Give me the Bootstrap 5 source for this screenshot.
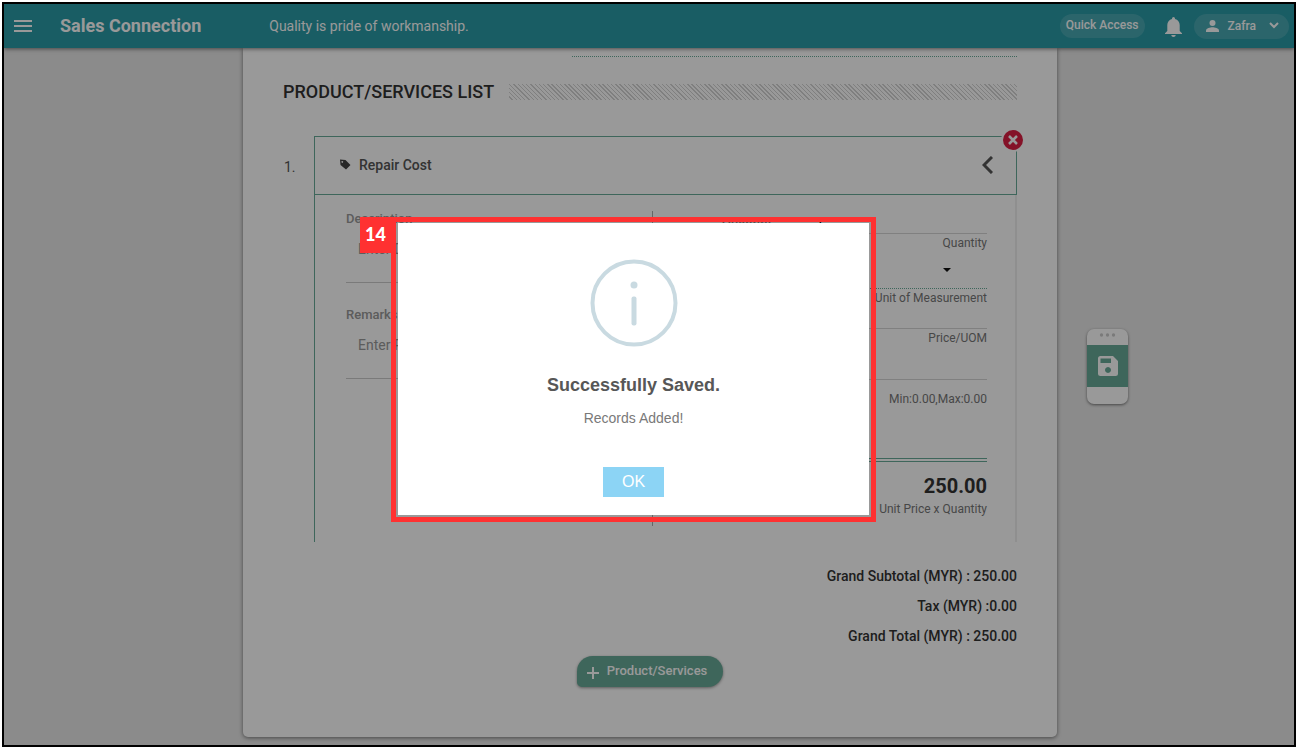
<!DOCTYPE html>
<html lang="en">
<head>
<meta charset="utf-8">
<meta name="viewport" content="width=device-width, initial-scale=1">
<title>Sales Connection</title>
<link href="https://cdn.jsdelivr.net/npm/bootstrap@5.3.0/dist/css/bootstrap.min.css" rel="stylesheet">
<style>
:root { --teal: #2a9ba7; --green: #68aa98; }
body { font-family: Roboto, "Liberation Sans", sans-serif; font-size: 14px; line-height: 18px; color: #333; background: #fff; padding: 2px 4px 4px 2px; display: flex; flex-direction: column; }
svg { display: block; flex: none; }
.app-frame { border: 2px solid #000; background: #e8e8e8; overflow: hidden; }
.topbar { background: var(--teal); height: 44px; padding: 0 5px 0 8px; color: #fff; box-shadow: 0 1px 4px rgba(0,0,0,.5); z-index: 1; }
.brand { font-size: 18px; font-weight: 700; line-height: 24px; color: #fff; margin-left: 26px; }
.motto { margin-left: 68px; }
.pill { border: 0; border-radius: 13px; background: rgba(255,255,255,.14); color: #fff; font-size: 12px; font-weight: 500; }
.pill-quick { padding: 2px 6px 4px; }
.pill-user { padding: 3px 10px 4px 12px; gap: 9px; margin-left: 10px; }
.bell { margin-left: 18px; }
.workspace { display: grid; grid-template-columns: 1fr minmax(0, 814px) 1fr; padding: 0 0 8px 2px; }
.sheet { grid-column: 2; background: #fff; border-radius: 0 0 5px 5px; box-shadow: 0 1px 4px rgba(0,0,0,.5); padding: 8px 40px 50px; }
.dotted-end { width: 445px; max-width: 100%; border-top: 1px dotted var(--green); }
.title-row { padding: 23px 0 32px; }
.section-title { font-size: 18px; font-weight: 500; line-height: 24px; margin: 0; }
.hatch { height: 16px; margin-left: 15px; background: repeating-linear-gradient(45deg, #fff 0 2px, #d4d4d4 2px 3px); }
.item-no { width: 31px; flex: none; padding: 22px 0 0 1px; color: #555; }
.item-panel { min-width: 0; }
.item-head { height: 59px; border: 1px solid var(--green); padding: 0 23px 2px 24px; }
.item-name { color: #555; font-weight: 500; margin-left: 8px; }
.remove-btn { width: 24px; height: 24px; top: -9px; right: -9px; }
.item-body { border-left: 1px solid var(--green); border-right: 2px solid #eee; padding: 16px 28px 16px 31px; }
.item-left { width: 307px; flex: none; border-right: 1px solid #aaa; }
.item-right { padding: 0 0 8px 69px; min-width: 0; }
.caption { display: block; font-size: 13px; font-weight: 500; line-height: 16px; color: #999; }
.memo { display: block; width: 100%; height: 56px; resize: none; border: 0; border-bottom: 1px solid #ccc; background: transparent; padding: 13px 12px 0; outline: 0; overflow: hidden; }
.memo::placeholder { color: #999; opacity: 1; }
.caption + .memo + .caption { margin-top: 24px; }
.field-row { border-bottom: 1px solid #d5d5d5; }
.field-row label { width: 94px; flex: none; font-size: 13px; font-weight: 500; color: #888; }
.field-row input, .uom { border: 0; background: transparent; padding: 0; min-width: 0; outline: 0; width: 100%; height: 18px; }
.h-qty { height: 23px; }
.h-price { height: 22px; }
.h-range { height: 33px; }
.uom { height: 37px; border-bottom: 1px dotted var(--green); appearance: none; }
.caret { right: 36px; top: 16px; pointer-events: none; }
.hint { font-size: 12px; line-height: 18px; color: #777; text-align: right; }
.range-hint { margin-top: 10px; }
.double-rule { border-top: 4px double var(--green); margin: 50px 0 10px; }
.amount { font-size: 20px; font-weight: 700; line-height: 28px; text-align: right; }
.totals { margin-top: 19px; font-weight: 500; line-height: 30px; text-align: right; font-size: 14px; }
.add-btn { border: 0; background: var(--green); color: #fff; font-size: 13px; font-weight: 500; border-radius: 16px 16px 16px 5px; height: 31px; padding: 0 16px 2px 10px; box-shadow: 0 1px 3px rgba(0,0,0,.4); margin-top: 5px; gap: 8px; }
.save-dock { margin: 281px 0 0 30px; width: 41px; height: 75px; border-radius: 7px; background: #fff; box-shadow: 0 1px 3px rgba(0,0,0,.5); overflow: hidden; }
.dock-dots { height: 16px; padding: 4px 12px 0; }
.save-btn { border: 0; background: var(--green); height: 42px; width: 100%; }
.dimmer { background: rgba(0,0,0,.4); z-index: 5; padding: 0 31px 10px 0; }
.callout-box { width: 485px; border: 5px solid #ff3131; padding: 1px 2px 2px; }
.step-no { left: -36px; top: -5px; width: 36px; height: 36px; background: #ff3131; color: #fff; font: 900 18px/35px Lato, "Open Sans", sans-serif; padding-left: 5px; }
.dialog-box { background: #fff; height: 292px; padding-top: 36px; font-family: "Liberation Sans", Arial, sans-serif; color: #797979; }
.dialog-box h2 { font-size: 18px; line-height: 24px; font-weight: 700; color: #575757; margin: 26px 0 12px; }
.ok-btn { border: 0; background: #8cd4f5; color: #fff; width: 61px; height: 30px; font-size: 16px; margin-top: 40px; }
</style>
</head>
<body class="min-vh-100">
<div class="app-frame position-relative flex-grow-1 d-flex flex-column">
  <header class="topbar d-flex align-items-center position-relative">
    <button class="btn p-0 border-0" type="button" aria-label="Menu"><svg width="22" height="16" viewBox="0 0 22 16" fill="none" stroke="#fff" stroke-width="2"><path d="M2 3h18M2 8h18M2 13h18"/></svg></button>
    <a class="brand text-decoration-none" href="#">Sales Connection</a>
    <span class="motto">Quality is pride of workmanship.</span>
    <button class="pill pill-quick ms-auto" type="button">Quick Access</button>
    <button class="btn p-0 border-0 bell" type="button" aria-label="Notifications"><svg width="21" height="24" viewBox="0 0 21 24" fill="#fff"><path d="M10.500 3a1.500 1.500 0 0 1 1.500 1.500v.6c2.900.7 4.700 3 4.700 6V17l2.300 2.200v.8H2v-.8L4.300 17v-5.900c0-3 1.800-5.300 4.700-6v-.6A1.500 1.500 0 0 1 10.500 3zM8.300 21h4.400c0 1.200-1 2-2.200 2s-2.200-.8-2.200-2z"/></svg></button>
    <button class="pill pill-user d-flex align-items-center" type="button"><svg width="13" height="12" viewBox="0 0 13 12" fill="#fff"><circle cx="6.500" cy="3" r="3"/><path d="M0 12v-1.500C0 8.300 4.300 7.300 6.500 7.300s6.500 1 6.500 3.200V12z"/></svg>Zafra<svg class="ms-1" width="10" height="7" viewBox="0 0 10 7" fill="none" stroke="#fff" stroke-width="2"><path d="M1 1l4 4 4-4"/></svg></button>
  </header>

  <main class="workspace flex-grow-1">
    <section class="sheet">
      <div class="dotted-end ms-auto"></div>
      <div class="title-row d-flex align-items-center">
        <h1 class="section-title">PRODUCT/SERVICES LIST</h1>
        <div class="hatch flex-fill"></div>
      </div>
      <div class="d-flex">
        <div class="item-no">1.</div>
        <div class="item-panel flex-fill">
          <div class="item-head d-flex align-items-center position-relative">
            <svg width="12" height="11" viewBox="0 0 12 11" fill="#444"><path fill-rule="evenodd" d="M1 .5L6.500 1 11.500 6 7 10.500 1.500 6zM3.200 2a.9.9 0 1 0 .1 0z"/></svg>
            <span class="item-name">Repair Cost</span>
            <button class="btn p-0 border-0 ms-auto" type="button" aria-label="Collapse"><svg width="11" height="18" viewBox="0 0 11 18" fill="none" stroke="#555" stroke-width="3"><path d="M10 1L2 9l8 8"/></svg></button>
            <button class="btn p-0 border-0 remove-btn position-absolute" type="button" aria-label="Remove item"><svg width="24" height="24" viewBox="0 0 24 24"><circle cx="12" cy="12" r="12" fill="#fff"/><circle cx="12" cy="12" r="10" fill="#dc1f43"/><path d="M8 8l8 8M16 8l-8 8" stroke="#fff" stroke-width="2.500"/></svg></button>
          </div>
          <div class="item-body d-flex">
            <div class="item-left">
              <label class="caption" for="desc">Description</label>
              <textarea class="memo" id="desc" placeholder="Enter Description"></textarea>
              <label class="caption" for="remarks">Remarks</label>
              <textarea class="memo" id="remarks" placeholder="Enter Remarks"></textarea>
            </div>
            <div class="item-right flex-fill">
              <div class="field-row h-qty d-flex align-items-end"><label for="qty">Quantity</label><input id="qty" value="1"></div>
              <div class="hint">Quantity</div>
              <div class="position-relative">
                <select class="uom d-block" aria-label="Unit of Measurement"><option></option></select>
                <svg class="caret position-absolute" width="8" height="4" viewBox="0 0 8 4"><path d="M0 0h8L4 4z" fill="#111"/></svg>
              </div>
              <div class="hint">Unit of Measurement</div>
              <div class="field-row h-price d-flex align-items-end"><input aria-label="Price per unit"></div>
              <div class="hint">Price/UOM</div>
              <div class="field-row h-range d-flex align-items-end"><input aria-label="Price range"></div>
              <div class="hint range-hint">Min:0.00,Max:0.00</div>
              <div class="double-rule"></div>
              <div class="amount">250.00</div>
              <div class="hint">Unit Price x Quantity</div>
            </div>
          </div>
        </div>
      </div>
      <div class="totals">
        <div>Grand Subtotal (MYR) : 250.00</div>
        <div>Tax (MYR) :0.00</div>
        <div>Grand Total (MYR) : 250.00</div>
      </div>
      <div class="d-flex justify-content-center">
        <button class="add-btn d-flex align-items-center" type="button"><svg class="mt-1" width="12" height="12" viewBox="0 0 12 12" stroke="#fff" stroke-width="2"><path d="M6 0v12M0 6h12"/></svg>Product/Services</button>
      </div>
    </section>
    <aside class="save-dock">
      <div class="dock-dots"><svg width="17" height="4" viewBox="0 0 17 4" fill="#ccc"><circle cx="2.500" cy="2" r="1.700"/><circle cx="8.500" cy="2" r="1.700"/><circle cx="14.500" cy="2" r="1.700"/></svg></div>
      <button class="save-btn d-flex align-items-center justify-content-center" type="button" aria-label="Save"><svg width="20" height="20" viewBox="0 0 20 20" fill="#fff"><path fill-rule="evenodd" d="M2.500 0H15l5 5v12.500a2.500 2.500 0 0 1-2.500 2.500h-15A2.500 2.500 0 0 1 0 17.500v-15A2.500 2.500 0 0 1 2.500 0zM2.500 2.500v4.500H13V2.500zM10 11a3 3 0 1 0 .01 0z"/></svg></button>
    </aside>
  </main>

  <div class="dimmer position-absolute top-0 bottom-0 start-0 end-0 d-flex align-items-center justify-content-center">
    <div class="callout-box position-relative">
      <div class="step-no position-absolute">14</div>
      <div class="dialog-box text-center" role="dialog" aria-labelledby="saved-title">
        <svg class="mx-auto" width="88" height="88" viewBox="0 0 88 88"><circle cx="44" cy="44" r="41.500" fill="none" stroke="#c9dae1" stroke-width="4"/><circle cx="44" cy="26" r="3.500" fill="#c9dae1"/><rect x="41.500" y="37.500" width="5" height="29" rx="2" fill="#c9dae1"/></svg>
        <h2 id="saved-title">Successfully Saved.</h2>
        <div>Records Added!</div>
        <button class="ok-btn" type="button">OK</button>
      </div>
    </div>
  </div>
</div>
<script src="https://cdn.jsdelivr.net/npm/bootstrap@5.3.0/dist/js/bootstrap.bundle.min.js"></script>
</body>
</html>
